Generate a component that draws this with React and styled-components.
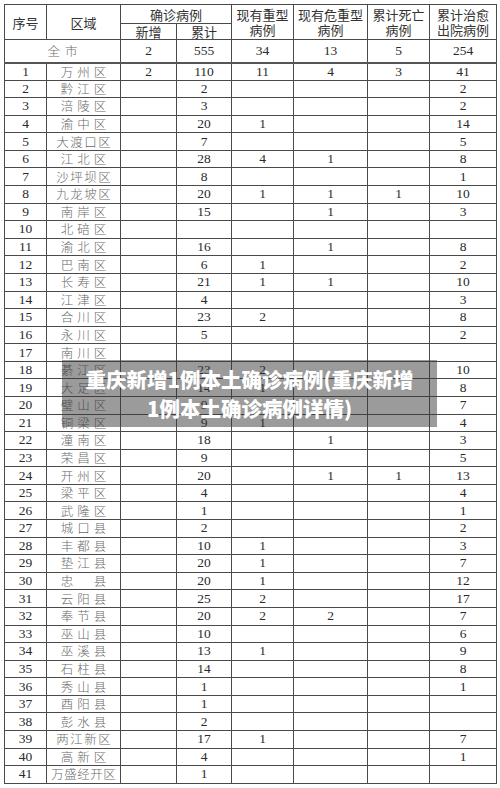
import React from 'react';
import styled, { createGlobalStyle } from 'styled-components';

const GlobalStyle = createGlobalStyle`
  html, body {
    margin: 0;
    padding: 0;
    background: #fff;
  }
`;

const Page = styled.div`
  position: relative;
  width: 500px;
  height: 788px;
  padding: 4px 0 0 4px;
  box-sizing: border-box;
  overflow: hidden;
`;

const Table = styled.table`
  width: 492px;
  border-collapse: collapse;
  table-layout: fixed;
  color: #2a2a2a;
`;

const HeadCell = styled.th`
  border: 1px solid #4a4a4a;
  padding: 0;
  font-family: "Noto Sans CJK SC", "Liberation Sans", sans-serif;
  font-size: 13px;
  font-weight: 400;
  line-height: 15px;
  text-align: center;
  vertical-align: middle;
  color: #333;
`;

const HeadRow = styled.tr`
  height: ${(p) => p.$h}px;
`;

const BodyRow = styled.tr`
  height: ${(p) => p.$h}px;
`;

const NumCell = styled.td`
  border-top: 1px solid #4a4a4a;
  border-bottom: ${(p) => p.$heavy ? '2px solid #555' : '1px solid #4a4a4a'};
  border-left: 1px solid ${(p) => p.$light ? '#9a9a9a' : '#4a4a4a'};
  border-right: 1px solid #4a4a4a;
  padding: 0;
  text-align: center;
  vertical-align: middle;
  font-family: "Liberation Serif", "DejaVu Serif", serif;
  font-size: 13.5px;
  line-height: 14px;
  color: #2a2a2a;
`;

const NameCell = styled(NumCell)`
  font-family: "Noto Sans CJK SC", "Liberation Sans", sans-serif;
  font-size: 12.5px;
  font-weight: 300;
  color: #6a6a6a;
  letter-spacing: ${(p) => p.$spacing}px;
  padding-left: ${(p) => p.$spacing}px;
  white-space: nowrap;
`;

const Overlay = styled.div`
  position: absolute;
  left: 62px;
  top: 360px;
  width: 375px;
  height: 67px;
  background: rgba(55, 55, 55, 0.5);
  display: flex;
  align-items: center;
  justify-content: center;
`;

const OverlayText = styled.div`
  text-align: center;
  font-family: "Noto Sans CJK SC", "Liberation Sans", sans-serif;
  font-weight: 900;
  font-size: 20.5px;
  line-height: 29px;
  color: #fff;
  white-space: nowrap;
`;

const rows = [
  ['1', '万州区', '2', '110', '11', '4', '3', '41'],
  ['2', '黔江区', '', '2', '', '', '', '2'],
  ['3', '涪陵区', '', '3', '', '', '', '2'],
  ['4', '渝中区', '', '20', '1', '', '', '14'],
  ['5', '大渡口区', '', '7', '', '', '', '5'],
  ['6', '江北区', '', '28', '4', '1', '', '8'],
  ['7', '沙坪坝区', '', '8', '', '', '', '1'],
  ['8', '九龙坡区', '', '20', '1', '1', '1', '10'],
  ['9', '南岸区', '', '15', '', '1', '', '3'],
  ['10', '北碚区', '', '', '', '', '', ''],
  ['11', '渝北区', '', '16', '', '1', '', '8'],
  ['12', '巴南区', '', '6', '1', '', '', '2'],
  ['13', '长寿区', '', '21', '1', '1', '', '10'],
  ['14', '江津区', '', '4', '', '', '', '3'],
  ['15', '合川区', '', '23', '2', '', '', '8'],
  ['16', '永川区', '', '5', '', '', '', '2'],
  ['17', '南川区', '', '', '', '', '', ''],
  ['18', '綦江区', '', '23', '2', '', '', '10'],
  ['19', '大足区', '', '14', '1', '', '', '8'],
  ['20', '璧山区', '', '9', '', '', '', '7'],
  ['21', '铜梁区', '', '9', '1', '', '', '4'],
  ['22', '潼南区', '', '18', '', '1', '', '3'],
  ['23', '荣昌区', '', '9', '', '', '', '5'],
  ['24', '开州区', '', '20', '', '1', '1', '13'],
  ['25', '梁平区', '', '4', '', '', '', '4'],
  ['26', '武隆区', '', '1', '', '', '', '1'],
  ['27', '城口县', '', '2', '', '', '', '2'],
  ['28', '丰都县', '', '10', '1', '', '', '3'],
  ['29', '垫江县', '', '20', '1', '', '', '7'],
  ['30', '忠　县', '', '20', '1', '', '', '12'],
  ['31', '云阳县', '', '25', '2', '', '', '17'],
  ['32', '奉节县', '', '20', '2', '2', '', '7'],
  ['33', '巫山县', '', '10', '', '', '', '6'],
  ['34', '巫溪县', '', '13', '1', '', '', '9'],
  ['35', '石柱县', '', '14', '', '', '', '8'],
  ['36', '秀山县', '', '1', '', '', '', '1'],
  ['37', '酉阳县', '', '1', '', '', '', ''],
  ['38', '彭水县', '', '2', '', '', '', ''],
  ['39', '两江新区', '', '17', '1', '', '', '7'],
  ['40', '高新区', '', '4', '', '', '', '1'],
  ['41', '万盛经开区', '', '1', '', '', '', ''],
];

const spacingFor = (name) => {
  if (name.length <= 3) return 4;
  if (name.length === 4) return 1.5;
  return 0.5;
};

const lightCols = [2, 6];

const App = () => (
  <Page>
    <GlobalStyle />
    <Table>
      <colgroup>
        <col style={{ width: 42 }} />
        <col style={{ width: 74 }} />
        <col style={{ width: 56 }} />
        <col style={{ width: 55 }} />
        <col style={{ width: 62 }} />
        <col style={{ width: 74 }} />
        <col style={{ width: 62 }} />
        <col style={{ width: 67 }} />
      </colgroup>
      <thead>
        <HeadRow $h={19}>
          <HeadCell rowSpan={2}>序号</HeadCell>
          <HeadCell rowSpan={2}>区域</HeadCell>
          <HeadCell colSpan={2}>确诊病例</HeadCell>
          <HeadCell rowSpan={2}>现有重型<br />病例</HeadCell>
          <HeadCell rowSpan={2}>现有危重型<br />病例</HeadCell>
          <HeadCell rowSpan={2}>累计死亡<br />病例</HeadCell>
          <HeadCell rowSpan={2}>累计治愈<br />出院病例</HeadCell>
        </HeadRow>
        <HeadRow $h={16}>
          <HeadCell>新增</HeadCell>
          <HeadCell>累计</HeadCell>
        </HeadRow>
      </thead>
      <tbody>
        <BodyRow $h={23}>
          <NameCell colSpan={2} $spacing={5} $heavy>全市</NameCell>
          <NumCell $heavy $light>2</NumCell>
          <NumCell $heavy>555</NumCell>
          <NumCell $heavy>34</NumCell>
          <NumCell $heavy>13</NumCell>
          <NumCell $heavy $light>5</NumCell>
          <NumCell $heavy>254</NumCell>
        </BodyRow>
        {rows.map((r) => (
          <BodyRow key={r[0]} $h={17.58}>
            <NumCell>{r[0]}</NumCell>
            <NameCell $spacing={spacingFor(r[1])}>{r[1]}</NameCell>
            {r.slice(2).map((v, i) => (
              <NumCell key={i} $light={lightCols.includes(i + 2)}>{v}</NumCell>
            ))}
          </BodyRow>
        ))}
      </tbody>
    </Table>
    <Overlay>
      <OverlayText>
        重庆新增1例本土确诊病例(重庆新增
        <br />
        1例本土确诊病例详情)
      </OverlayText>
    </Overlay>
  </Page>
);

export default App;
